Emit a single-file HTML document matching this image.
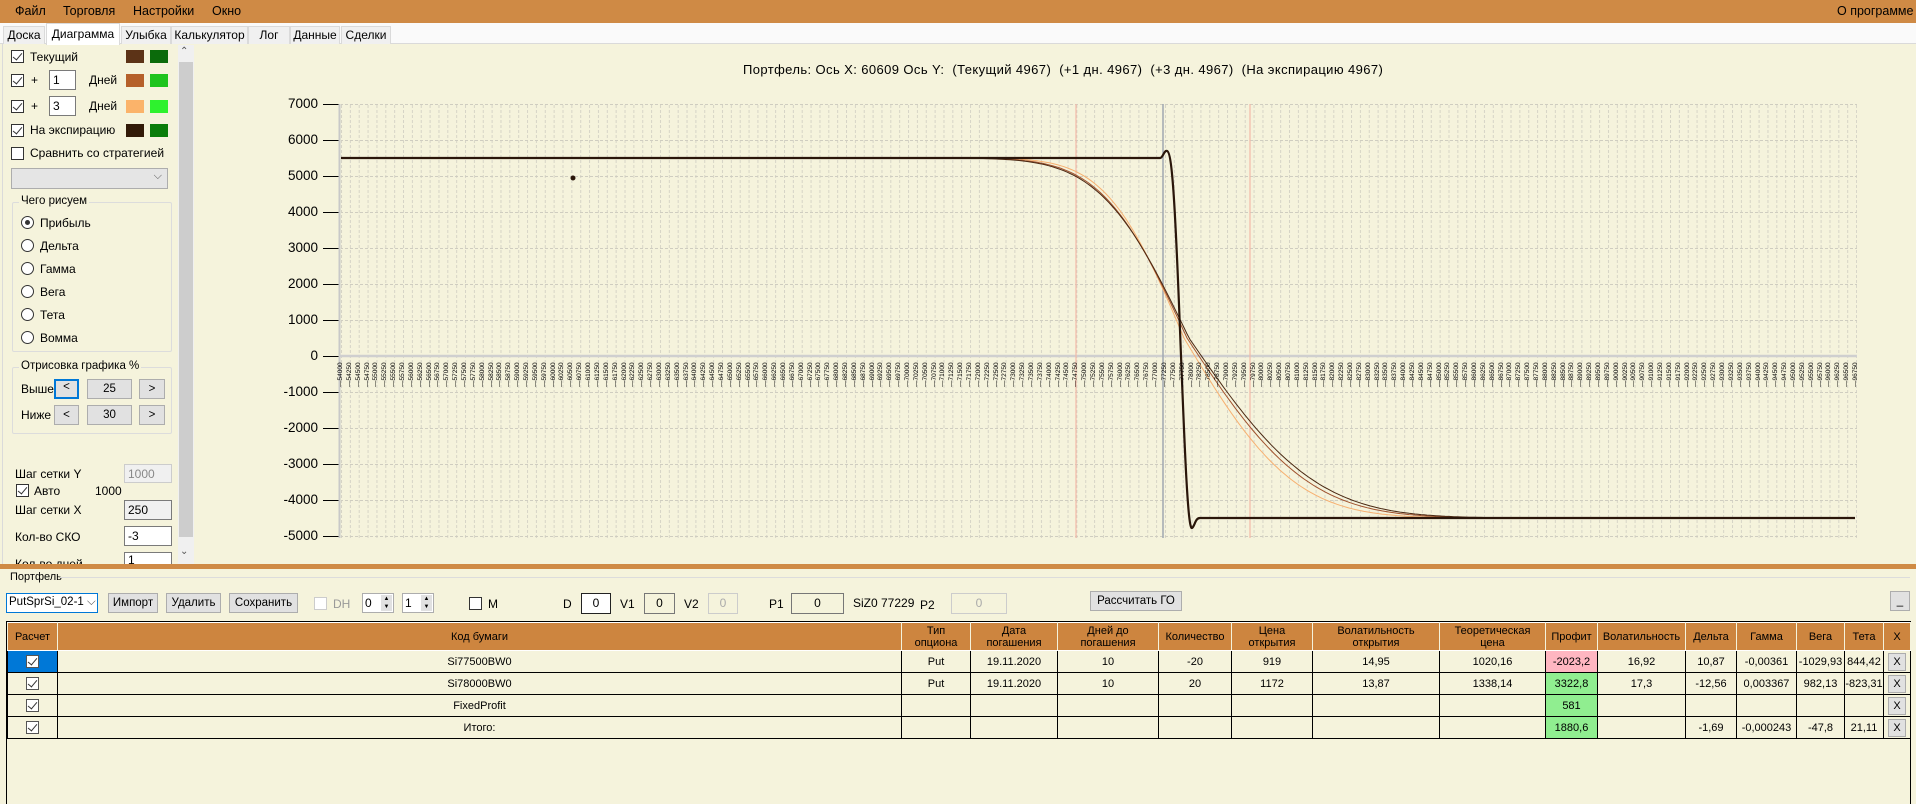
<!DOCTYPE html>
<html><head><meta charset="utf-8">
<style>
*{box-sizing:border-box;margin:0;padding:0}
body{width:1916px;height:804px;overflow:hidden;background:#f5f3dc;font-family:"Liberation Sans",sans-serif;font-size:12px;color:#000;position:relative}
.a{position:absolute}
.menu{left:0;top:0;width:1916px;height:23px;background:#cf8a45}
.menu span{position:absolute;top:4px;font-size:12.5px}
.tabs{left:0;top:23px;width:1916px;height:21px;background:#fafafa;border-bottom:1px solid #dadada}
.tab{position:absolute;top:3px;height:18px;border:1px solid #dadada;border-bottom:none;background:#f0f0f0;font-size:12px;text-align:center;line-height:16px}
.tab.sel{top:0;height:22px;background:#fff;line-height:20px}
.cb{position:absolute;width:13px;height:13px;border:1px solid #333;background:#fff}
.cb.on::after{content:"";position:absolute;left:3px;top:0px;width:4px;height:8px;border:solid #333;border-width:0 1.3px 1.3px 0;transform:rotate(40deg)}
.sw{position:absolute;width:18px;height:13px}
.inp{position:absolute;background:#fff;border:1px solid #7a7a7a;font-size:12px;padding-left:3px;line-height:18px}
.rad{position:absolute;width:13px;height:13px;border:1px solid #333;border-radius:50%;background:#fff}
.grp{position:absolute;border:1px solid #dcdcdc;border-radius:2px}
.grp>b{position:absolute;top:-8px;left:6px;background:#f5f3dc;font-weight:normal;padding:0 2px;font-size:11.5px}
.btn{position:absolute;background:#e1e1e1;border:1px solid #adadad;text-align:center;font-size:11.5px}
table{border-collapse:collapse;font-size:11px;table-layout:fixed}
td,th{border:1px solid #000;text-align:center;height:22px;padding:0;overflow:hidden;white-space:nowrap}
th{background:#cd853f;font-weight:normal;border-color:#fff #f5f3dc;line-height:12px;height:28px}
.xb{display:inline-block;width:18px;height:18px;background:#e1e1e1;border:1px solid #adadad;line-height:16px}
.cbs{display:inline-block;width:13px;height:13px;border:1px solid #555;background:#fff;position:relative;vertical-align:middle}
.cbs::after{content:"";position:absolute;left:3px;top:0;width:4px;height:8px;border:solid #333;border-width:0 1.2px 1.2px 0;transform:rotate(40deg)}
.xl{position:absolute;top:357px;left:337px;display:flex;font-size:6.5px;height:30px}
.xl span{width:8.86px;writing-mode:vertical-rl;transform:rotate(180deg);line-height:8.86px;text-align:left;padding-bottom:0}
</style></head><body>
<div class="a menu"><span style="left:15px">Файл</span><span style="left:63px">Торговля</span><span style="left:133px">Настройки</span><span style="left:212px">Окно</span><span style="left:1837px">О программе</span></div>
<div class="a tabs">
<div class="tab" style="left:3px;width:42px">Доска</div>
<div class="tab sel" style="left:46px;width:74px">Диаграмма</div>
<div class="tab" style="left:121px;width:50px">Улыбка</div>
<div class="tab" style="left:171px;width:77px">Калькулятор</div>
<div class="tab" style="left:248px;width:42px">Лог</div>
<div class="tab" style="left:290px;width:50px">Данные</div>
<div class="tab" style="left:341px;width:50px">Сделки</div>
</div>
<div class="a" style="left:2px;top:44px;width:1px;height:520px;background:#dadada"></div>
<div class="cb on" style="left:11px;top:50px"></div><div class="a" style="left:30px;top:50px">Текущий</div>
<div class="sw" style="left:126px;top:50px;background:#5c3317"></div><div class="sw" style="left:150px;top:50px;background:#0b6b0b"></div>
<div class="cb on" style="left:11px;top:74px"></div><div class="a" style="left:31px;top:73px">+</div>
<div class="inp" style="left:49px;top:70px;width:27px;height:20px">1</div><div class="a" style="left:89px;top:73px">Дней</div>
<div class="sw" style="left:126px;top:74px;background:#b5602a"></div><div class="sw" style="left:150px;top:74px;background:#1ec41e"></div>
<div class="cb on" style="left:11px;top:100px"></div><div class="a" style="left:31px;top:99px">+</div>
<div class="inp" style="left:49px;top:96px;width:27px;height:20px">3</div><div class="a" style="left:89px;top:99px">Дней</div>
<div class="sw" style="left:126px;top:100px;background:#fbb36a"></div><div class="sw" style="left:150px;top:100px;background:#2ef22e"></div>
<div class="cb on" style="left:11px;top:124px"></div><div class="a" style="left:30px;top:123px">На экспирацию</div>
<div class="sw" style="left:126px;top:124px;background:#321a08"></div><div class="sw" style="left:150px;top:124px;background:#0a7d0a"></div>
<div class="cb" style="left:11px;top:147px"></div><div class="a" style="left:30px;top:146px">Сравнить со стратегией</div>
<div class="a" style="left:11px;top:168px;width:157px;height:21px;background:#e5e5e5;border:1px solid #adadad"><span style="position:absolute;right:5px;top:1px;font-size:11px;color:#555">⌵</span></div>
<div class="grp" style="left:12px;top:202px;width:160px;height:150px"><b>Чего рисуем</b></div>
<div class="rad" style="left:21px;top:216px"><div style="position:absolute;left:3px;top:3px;width:5px;height:5px;border-radius:50%;background:#333"></div></div><div class="a" style="left:40px;top:216px">Прибыль</div>
<div class="rad" style="left:21px;top:239px"></div><div class="a" style="left:40px;top:239px">Дельта</div>
<div class="rad" style="left:21px;top:262px"></div><div class="a" style="left:40px;top:262px">Гамма</div>
<div class="rad" style="left:21px;top:285px"></div><div class="a" style="left:40px;top:285px">Вега</div>
<div class="rad" style="left:21px;top:308px"></div><div class="a" style="left:40px;top:308px">Тета</div>
<div class="rad" style="left:21px;top:331px"></div><div class="a" style="left:40px;top:331px">Вомма</div>
<div class="grp" style="left:12px;top:367px;width:160px;height:67px"><b>Отрисовка графика %</b></div>
<div class="a" style="left:21px;top:382px">Выше</div>
<div class="btn" style="left:54px;top:379px;width:25px;height:20px;border:2px solid #0078d7">&lt;</div>
<div class="btn" style="left:87px;top:379px;width:45px;height:20px;line-height:18px">25</div>
<div class="btn" style="left:139px;top:379px;width:26px;height:20px;line-height:18px">&gt;</div>
<div class="a" style="left:21px;top:408px">Ниже</div>
<div class="btn" style="left:54px;top:405px;width:25px;height:20px;line-height:18px">&lt;</div>
<div class="btn" style="left:87px;top:405px;width:45px;height:20px;line-height:18px">30</div>
<div class="btn" style="left:139px;top:405px;width:26px;height:20px;line-height:18px">&gt;</div>
<div class="a" style="left:15px;top:467px">Шаг сетки Y</div>
<div class="inp" style="left:124px;top:464px;width:48px;height:19px;background:#f0f0f0;border-color:#ccc;color:#888">1000</div>
<div class="cb on" style="left:16px;top:484px"></div><div class="a" style="left:34px;top:484px">Авто</div><div class="a" style="left:95px;top:484px">1000</div>
<div class="a" style="left:15px;top:503px">Шаг сетки X</div>
<div class="inp" style="left:124px;top:500px;width:48px;height:20px;background:#f0f0f0">250</div>
<div class="a" style="left:15px;top:530px">Кол-во СКО</div>
<div class="inp" style="left:124px;top:526px;width:48px;height:20px">-3</div>
<div class="a" style="left:15px;top:557px;height:8px;overflow:hidden">Кол-во дней</div>
<div class="inp" style="left:124px;top:552px;width:48px;height:13px;overflow:hidden;line-height:14px">1</div>
<div class="a" style="left:178px;top:45px;width:16px;height:520px;background:#f0f0f0"></div>
<div class="a" style="left:179px;top:62px;width:14px;height:475px;background:#cdcdcd"></div>
<div class="a" style="left:180px;top:46px;font-size:10px;color:#555">⌃</div>
<div class="a" style="left:180px;top:546px;font-size:10px;color:#555">⌄</div>
<div class="a" style="left:743px;top:62px;font-size:13px;letter-spacing:0.4px;white-space:pre">Портфель: Ось X: 60609 Ось Y:  (Текущий 4967)  (+1 дн. 4967)  (+3 дн. 4967)  (На экспирацию 4967)</div>
<div class="a" style="left:250px;top:86px;width:68px;text-align:right;font-size:13.5px;line-height:36px">7000<br>6000<br>5000<br>4000<br>3000<br>2000<br>1000<br>0<br>-1000<br>-2000<br>-3000<br>-4000<br>-5000</div>
<svg class="a" style="left:0;top:0" width="1916" height="560">
<defs>
<pattern id="gv" x="341" y="0" width="8.86" height="560" patternUnits="userSpaceOnUse"><line x1="0.5" y1="0" x2="0.5" y2="560" stroke="#d6d4c6" stroke-width="1" stroke-dasharray="3,2"/></pattern>
<pattern id="gh" x="0" y="104" width="1916" height="36" patternUnits="userSpaceOnUse"><line x1="0" y1="0.5" x2="1916" y2="0.5" stroke="#cfcdc0" stroke-width="1" stroke-dasharray="3,2"/></pattern>
</defs>
<rect x="341" y="104" width="1516" height="434" fill="url(#gv)"/>
<rect x="341" y="104" width="1516" height="434" fill="url(#gh)"/>
<g stroke="#000" stroke-width="1">
<line x1="323" y1="104.5" x2="339" y2="104.5"/><line x1="323" y1="140.5" x2="339" y2="140.5"/><line x1="323" y1="176.5" x2="339" y2="176.5"/><line x1="323" y1="212.5" x2="339" y2="212.5"/><line x1="323" y1="248.5" x2="339" y2="248.5"/><line x1="323" y1="284.5" x2="339" y2="284.5"/><line x1="323" y1="320.5" x2="339" y2="320.5"/><line x1="323" y1="356.5" x2="339" y2="356.5"/><line x1="323" y1="392.5" x2="339" y2="392.5"/><line x1="323" y1="428.5" x2="339" y2="428.5"/><line x1="323" y1="464.5" x2="339" y2="464.5"/><line x1="323" y1="500.5" x2="339" y2="500.5"/><line x1="323" y1="536.5" x2="339" y2="536.5"/>
</g>
<line x1="339.5" y1="104" x2="339.5" y2="538" stroke="#c8c8c8" stroke-width="2"/>
<line x1="339" y1="356" x2="1857" y2="356" stroke="#cfcfcf" stroke-width="2.5"/>
<line x1="1076" y1="104" x2="1076" y2="538" stroke="#f2b9a8" stroke-width="1.2"/>
<line x1="1250" y1="104" x2="1250" y2="538" stroke="#f2b9a8" stroke-width="1.2"/>
<line x1="1163" y1="104" x2="1163" y2="538" stroke="#a0a8b0" stroke-width="1.5"/>
<path id="c3" fill="none" stroke="#f7b070" stroke-width="1"/>
<path id="c1" fill="none" stroke="#a0522d" stroke-width="1"/>
<path id="c0" fill="none" stroke="#4a2812" stroke-width="1"/>
<path d="M341,158 L1160,158 C1163,158 1164,150 1167,151 C1172,152 1175,200 1180,330 C1185,460 1188,530 1192,528 C1195,526 1195,518 1200,518 L1855,518" fill="none" stroke="#2a160a" stroke-width="2.2"/>
<circle cx="573" cy="178" r="2.5" fill="#2a160a"/>
</svg>
<script>
function erf(x){var s=x<0?-1:1;x=Math.abs(x);var t=1/(1+0.3275911*x);var y=1-(((((1.061405429*t-1.453152027)*t)+1.421413741)*t-0.284496736)*t+0.254829592)*t*Math.exp(-x*x);return s*y;}
function mk(id,c,wl,wr){var d="M341,158";for(var x=950;x<=1855;x+=3){var w=x<c?wl:wr;var v=500-5000*erf((x-c)/w);var y=356-v*0.036;d+=" L"+x+","+y.toFixed(1);}document.getElementById(id).setAttribute("d",d);}
mk("c3",1184,86,122);mk("c1",1187,94,134);mk("c0",1189,98,140);
</script>
<div class="xl">
<span>—54000</span><span>—54250</span><span>—54500</span><span>—54750</span><span>—55000</span><span>—55250</span><span>—55500</span><span>—55750</span><span>—56000</span><span>—56250</span><span>—56500</span><span>—56750</span><span>—57000</span><span>—57250</span><span>—57500</span><span>—57750</span><span>—58000</span><span>—58250</span><span>—58500</span><span>—58750</span><span>—59000</span><span>—59250</span><span>—59500</span><span>—59750</span><span>—60000</span><span>—60250</span><span>—60500</span><span>—60750</span><span>—61000</span><span>—61250</span><span>—61500</span><span>—61750</span><span>—62000</span><span>—62250</span><span>—62500</span><span>—62750</span><span>—63000</span><span>—63250</span><span>—63500</span><span>—63750</span><span>—64000</span><span>—64250</span><span>—64500</span><span>—64750</span><span>—65000</span><span>—65250</span><span>—65500</span><span>—65750</span><span>—66000</span><span>—66250</span><span>—66500</span><span>—66750</span><span>—67000</span><span>—67250</span><span>—67500</span><span>—67750</span><span>—68000</span><span>—68250</span><span>—68500</span><span>—68750</span><span>—69000</span><span>—69250</span><span>—69500</span><span>—69750</span><span>—70000</span><span>—70250</span><span>—70500</span><span>—70750</span><span>—71000</span><span>—71250</span><span>—71500</span><span>—71750</span><span>—72000</span><span>—72250</span><span>—72500</span><span>—72750</span><span>—73000</span><span>—73250</span><span>—73500</span><span>—73750</span><span>—74000</span><span>—74250</span><span>—74500</span><span>—74750</span><span>—75000</span><span>—75250</span><span>—75500</span><span>—75750</span><span>—76000</span><span>—76250</span><span>—76500</span><span>—76750</span><span>—77000</span><span>—77250</span><span>—77500</span><span>—77750</span><span>—78000</span><span>—78250</span><span>—78500</span><span>—78750</span><span>—79000</span><span>—79250</span><span>—79500</span><span>—79750</span><span>—80000</span><span>—80250</span><span>—80500</span><span>—80750</span><span>—81000</span><span>—81250</span><span>—81500</span><span>—81750</span><span>—82000</span><span>—82250</span><span>—82500</span><span>—82750</span><span>—83000</span><span>—83250</span><span>—83500</span><span>—83750</span><span>—84000</span><span>—84250</span><span>—84500</span><span>—84750</span><span>—85000</span><span>—85250</span><span>—85500</span><span>—85750</span><span>—86000</span><span>—86250</span><span>—86500</span><span>—86750</span><span>—87000</span><span>—87250</span><span>—87500</span><span>—87750</span><span>—88000</span><span>—88250</span><span>—88500</span><span>—88750</span><span>—89000</span><span>—89250</span><span>—89500</span><span>—89750</span><span>—90000</span><span>—90250</span><span>—90500</span><span>—90750</span><span>—91000</span><span>—91250</span><span>—91500</span><span>—91750</span><span>—92000</span><span>—92250</span><span>—92500</span><span>—92750</span><span>—93000</span><span>—93250</span><span>—93500</span><span>—93750</span><span>—94000</span><span>—94250</span><span>—94500</span><span>—94750</span><span>—95000</span><span>—95250</span><span>—95500</span><span>—95750</span><span>—96000</span><span>—96250</span><span>—96500</span><span>—96750</span>
</div>
<div class="a" style="left:0;top:564px;width:1916px;height:5px;background:#cf8a45"></div>
<div class="a" style="left:10px;top:571px;font-size:11px">Портфель</div>
<div class="a" style="left:60px;top:577px;width:1850px;height:1px;background:#dcdcdc"></div>
<div class="a" style="left:6px;top:593px;width:92px;height:20px;background:#fff;border:1px solid #0078d7;font-size:11.5px;padding:2px 0 0 2px">PutSprSi_02-1 <span style="color:#555">⌵</span></div>
<div class="btn" style="left:108px;top:593px;width:50px;height:20px;line-height:18px">Импорт</div>
<div class="btn" style="left:166px;top:593px;width:55px;height:20px;line-height:18px">Удалить</div>
<div class="btn" style="left:229px;top:593px;width:69px;height:20px;line-height:18px">Сохранить</div>
<div class="cb" style="left:314px;top:597px;border-color:#ccc"></div><div class="a" style="left:333px;top:597px;color:#999">DH</div>
<div class="a" style="left:362px;top:593px;width:32px;height:20px;background:#fff;border:1px solid #adadad;padding:2px">0<span style="position:absolute;right:1px;top:1px;width:11px;height:16px;background:#e1e1e1;font-size:6px;line-height:8px;text-align:center">▲<br>▼</span></div>
<div class="a" style="left:402px;top:593px;width:32px;height:20px;background:#fff;border:1px solid #adadad;padding:2px">1<span style="position:absolute;right:1px;top:1px;width:11px;height:16px;background:#e1e1e1;font-size:6px;line-height:8px;text-align:center">▲<br>▼</span></div>
<div class="cb" style="left:469px;top:597px"></div><div class="a" style="left:488px;top:597px">M</div>
<div class="a" style="left:563px;top:597px">D</div>
<div class="a" style="left:581px;top:593px;width:30px;height:21px;border:1.5px solid #222;background:#fff;text-align:center;line-height:18px">0</div>
<div class="a" style="left:620px;top:597px">V1</div>
<div class="a" style="left:644px;top:593px;width:31px;height:21px;border:1px solid #777;text-align:center;line-height:19px">0</div>
<div class="a" style="left:684px;top:597px">V2</div>
<div class="a" style="left:708px;top:593px;width:30px;height:21px;border:1px solid #ccc;color:#aaa;text-align:center;line-height:19px">0</div>
<div class="a" style="left:769px;top:597px">P1</div>
<div class="a" style="left:791px;top:593px;width:53px;height:21px;border:1px solid #777;text-align:center;line-height:19px">0</div>
<div class="a" style="left:853px;top:596px">SiZ0 77229</div>
<div class="a" style="left:920px;top:598px">P2</div>
<div class="a" style="left:951px;top:593px;width:56px;height:21px;border:1px solid #ccc;color:#aaa;text-align:center;line-height:19px">0</div>
<div class="btn" style="left:1090px;top:591px;width:92px;height:20px;line-height:18px">Рассчитать ГО</div>
<div class="btn" style="left:1890px;top:591px;width:20px;height:20px;line-height:18px">_</div>
<div class="a" style="left:6px;top:621px;width:1905px;height:183px;border:1px solid #000;border-bottom:none"></div>
<table class="a" style="left:7px;top:622px;width:1903px">
<colgroup><col style="width:50px"><col style="width:844px"><col style="width:69px"><col style="width:87px"><col style="width:101px"><col style="width:73px"><col style="width:81px"><col style="width:127px"><col style="width:106px"><col style="width:52px"><col style="width:88px"><col style="width:51px"><col style="width:60px"><col style="width:48px"><col style="width:39px"><col style="width:27px"></colgroup>
<tr><th>Расчет</th><th>Код бумаги</th><th>Тип<br>опциона</th><th>Дата<br>погашения</th><th>Дней до<br>погашения</th><th>Количество</th><th>Цена<br>открытия</th><th>Волатильность<br>открытия</th><th>Теоретическая<br>цена</th><th>Профит</th><th>Волатильность</th><th>Дельта</th><th>Гамма</th><th>Вега</th><th>Тета</th><th>X</th></tr>
<tr><td style="background:#0078d7"><span class="cbs"></span></td><td>Si77500BW0</td><td>Put</td><td>19.11.2020</td><td>10</td><td>-20</td><td>919</td><td>14,95</td><td>1020,16</td><td style="background:#ffb6c1">-2023,2</td><td>16,92</td><td>10,87</td><td>-0,00361</td><td>-1029,93</td><td>844,42</td><td><span class="xb">X</span></td></tr>
<tr><td><span class="cbs"></span></td><td>Si78000BW0</td><td>Put</td><td>19.11.2020</td><td>10</td><td>20</td><td>1172</td><td>13,87</td><td>1338,14</td><td style="background:#90ee90">3322,8</td><td>17,3</td><td>-12,56</td><td>0,003367</td><td>982,13</td><td>-823,31</td><td><span class="xb">X</span></td></tr>
<tr><td><span class="cbs"></span></td><td>FixedProfit</td><td></td><td></td><td></td><td></td><td></td><td></td><td></td><td style="background:#90ee90">581</td><td></td><td></td><td></td><td></td><td></td><td><span class="xb">X</span></td></tr>
<tr><td><span class="cbs"></span></td><td>Итого:</td><td></td><td></td><td></td><td></td><td></td><td></td><td></td><td style="background:#90ee90">1880,6</td><td></td><td>-1,69</td><td>-0,000243</td><td>-47,8</td><td>21,11</td><td><span class="xb">X</span></td></tr>
</table>
</body></html>
